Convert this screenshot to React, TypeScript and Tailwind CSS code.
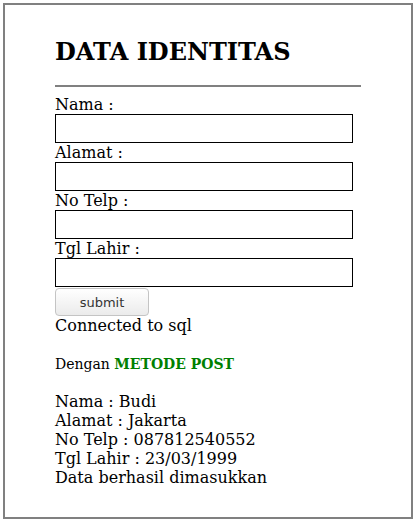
export default function App() {
  const serif = "font-['DejaVu_Serif',serif]";
  return (
    <div className={`pt-[3px] pl-[3px] bg-white min-h-screen text-black ${serif}`}>
      <div className="w-[410px] h-[516px] border-2 border-[#808080] px-[50px] pt-[33px]">
        <h2 className="text-[24px] font-bold leading-[28px] font-['DejaVu_Serif',serif]">
          DATA IDENTITAS
        </h2>
        <hr className="border-0 border-t-2 border-[#808080] mt-[19px] mb-[8px]" />
        <form className="flex flex-col items-start text-[16px] leading-[19px] font-['DejaVu_Serif',serif]">
          <label>Nama :</label>
          <input type="text" className="w-[298px] h-[29px] border border-black" />
          <label>Alamat :</label>
          <input type="text" className="w-[298px] h-[29px] border border-black" />
          <label>No Telp :</label>
          <input type="text" className="w-[298px] h-[29px] border border-black" />
          <label>Tgl Lahir :</label>
          <input type="text" className="w-[298px] h-[29px] border border-black" />
          <button
            type="button"
            className="mt-[1px] w-[94px] h-[28px] rounded-[4px] border border-[#c4c4c4] bg-gradient-to-b from-white to-[#ebebeb] text-[13px] text-[#333] font-['DejaVu_Sans',sans-serif]"
          >
            submit
          </button>
        </form>
        <p className="text-[16px] leading-[19px] font-['DejaVu_Serif',serif]">Connected to sql</p>
        <h5 className="text-[14px] leading-[16px] mt-[21px] mb-[20px] font-['DejaVu_Serif',serif]">
          Dengan <b className="text-[#008000]">METODE POST</b>
        </h5>
        <div className="text-[16px] leading-[19px] font-['DejaVu_Serif',serif]">
          <div>Nama : Budi</div>
          <div>Alamat : Jakarta</div>
          <div>No Telp : 087812540552</div>
          <div>Tgl Lahir : 23/03/1999</div>
          <div>Data berhasil dimasukkan</div>
        </div>
      </div>
    </div>
  );
}
